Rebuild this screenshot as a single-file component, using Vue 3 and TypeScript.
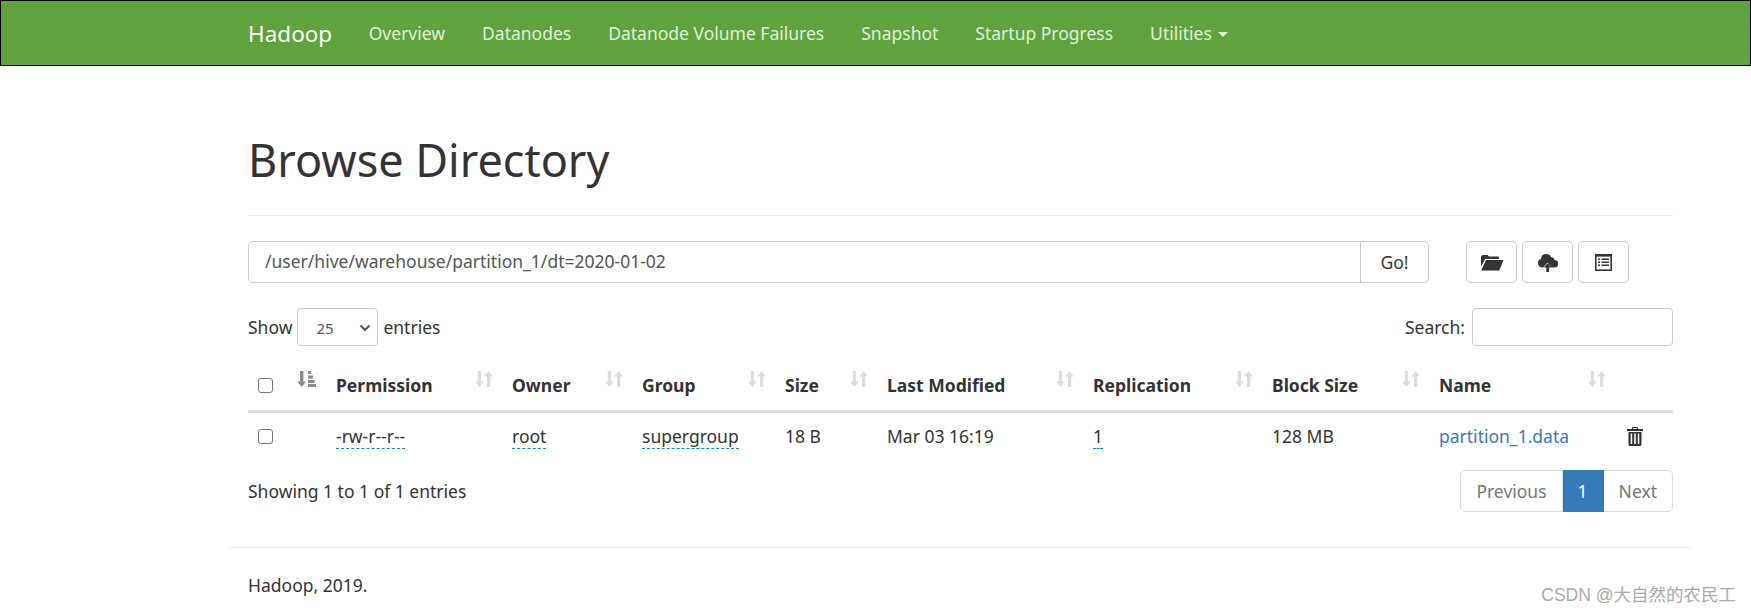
<script setup lang="ts">
const navLinks = ['Overview', 'Datanodes', 'Datanode Volume Failures', 'Snapshot', 'Startup Progress']

const columns = [
  { label: 'Permission', width: 176 },
  { label: 'Owner', width: 130 },
  { label: 'Group', width: 143 },
  { label: 'Size', width: 102 },
  { label: 'Last Modified', width: 206 },
  { label: 'Replication', width: 179 },
  { label: 'Block Size', width: 167 },
  { label: 'Name', width: 186 },
]
</script>

<template>
  <div class="page">
    <nav class="navbar">
      <a class="brand">Hadoop</a>
      <a v-for="link in navLinks" :key="link" class="nav-link">{{ link }}</a>
      <a class="nav-link">Utilities <span class="caret" /></a>
    </nav>

    <div class="container">
      <div class="page-header">
        <h1>Browse Directory</h1>
      </div>

      <div class="path-row">
        <div class="path-group">
          <div class="path-input">/user/hive/warehouse/partition_1/dt=2020-01-02</div>
          <button class="go">Go!</button>
        </div>
        <div class="tools">
          <button class="tool">
            <svg width="24" height="20" viewBox="0 0 24 20">
              <path fill="#333" d="M1 4.5 2.2 3h5.6l1 1.5h9.5l.9 1V7H5.2L1 14.5z" />
              <path fill="#333" d="M6 8h17.5l-4.2 10.5H1.2z" />
            </svg>
          </button>
          <button class="tool">
            <svg width="21" height="21" viewBox="0 0 21 21">
              <path fill="#333" d="M5 15.5a4.4 4.4 0 0 1-1-8.6 5 5 0 0 1 5-5 5.4 5.4 0 0 1 5.2 3.4 3.4 3.4 0 0 1 3.5 2.6 3.8 3.8 0 0 1-.6 7.6h-2.4l-4.2-5-4.3 5z" />
              <path fill="#333" d="m10.7 11.2 3.9 4.4h-2.5V20H9.3v-4.4H6.8z" />
            </svg>
          </button>
          <button class="tool">
            <svg width="17" height="17" viewBox="0 0 17 17">
              <rect x="0.8" y="0.8" width="15.4" height="15.4" fill="none" stroke="#333" stroke-width="1.6" />
              <rect x="0" y="0" width="17" height="2.6" fill="#333" />
              <path fill="#333" d="M3 4.5h2v1.6H3zM6.5 4.5H14v1.6H6.5zM3 7.5h2v1.6H3zM6.5 7.5H14v1.6H6.5zM3 10.5h2v1.6H3zM6.5 10.5H14v1.6H6.5z" />
            </svg>
          </button>
        </div>
      </div>

      <div class="filter-row">
        <label class="length">
          Show
          <span class="select">
            <span>25</span>
            <svg width="12" height="8" viewBox="0 0 12 8"><path d="m1.5 1.5 4.5 4.5 4.5-4.5" fill="none" stroke="#555" stroke-width="2" /></svg>
          </span>
          entries
        </label>
        <label class="search">Search: <span class="search-input" /></label>
      </div>

      <table class="files">
        <colgroup>
          <col style="width: 40px" />
          <col style="width: 38px" />
          <col v-for="col in columns" :key="col.label" :style="{ width: col.width + 'px' }" />
          <col style="width: 58px" />
        </colgroup>
        <thead>
          <tr>
            <th><span class="check" /></th>
            <th class="sort-cell">
              <svg class="sort-on" width="19" height="18" viewBox="0 0 19 18">
                <path fill="#8a8a8a" d="M3 1h3.4v10.5H9L4.7 17 .4 11.500H3z" />
                <path fill="#8a8a8a" d="M11 1h3v3h-3zM11 5.500h5v3h-5zM11 10h6.500v3H11zM11 14h8v3h-8z" />
              </svg>
            </th>
            <th v-for="col in columns" :key="col.label">
              {{ col.label }}
              <svg class="sort" width="18" height="18" viewBox="0 0 18 18">
                <path fill="#dcdcdc" d="M2.800 1h3.200v10.500h2.600L4.400 17 .2 11.500h2.600z" />
                <path fill="#dcdcdc" d="M12 17V6.500H9.400L13.600 1l4.200 5.500h-2.600V17z" />
              </svg>
            </th>
            <th />
          </tr>
        </thead>
        <tbody>
          <tr>
            <td><span class="check" /></td>
            <td />
            <td><span class="editable">-rw-r--r--</span></td>
            <td><span class="editable">root</span></td>
            <td><span class="editable">supergroup</span></td>
            <td>18 B</td>
            <td>Mar 03 16:19</td>
            <td><span class="editable">1</span></td>
            <td>128 MB</td>
            <td><a class="file-link">partition_1.data</a></td>
            <td>
              <svg class="trash" width="16" height="19" viewBox="0 0 16 19">
                <path fill="#333" d="M5.500 0h5l.8 2H16v2H0V2h4.700zM6.300 1.100 6 2h4l-.3-.9z" />
                <path fill="#333" fill-rule="evenodd" d="M1.500 5h13v12.500L13.500 19h-11l-1-1.500zM3.700 6.500v10.500h1.500V6.500zM7.200 6.500v10.500h1.600V6.500zM10.800 6.500v10.500h1.500V6.500z" />
              </svg>
            </td>
          </tr>
        </tbody>
      </table>

      <div class="table-foot">
        <span>Showing 1 to 1 of 1 entries</span>
        <div class="pagination">
          <a class="pg first">Previous</a>
          <a class="pg active">1</a>
          <a class="pg last">Next</a>
        </div>
      </div>

      <div class="footer">Hadoop, 2019.</div>
    </div>

    <div class="watermark">CSDN @大自然的农民工</div>
  </div>
</template>

<style>
html, body {
  margin: 0;
  background: #fff;
}
</style>

<style scoped>
.page {
  position: relative;
  width: 1751px;
  height: 614px;
  overflow: hidden;
  font-family: "Noto Sans", "Noto Sans CJK SC", sans-serif;
  font-size: 17.5px;
  line-height: 25px;
  color: #333;
}
.navbar {
  display: flex;
  align-items: center;
  box-sizing: border-box;
  height: 66px;
  padding-left: 229px;
  background: #5fa33e;
  border: 1px solid #000;
}
.brand {
  padding: 0 18px;
  font-size: 22.5px;
  color: #fff;
}
.nav-link {
  padding: 0 18.500px;
  color: #dff0d8;
}
.caret {
  display: inline-block;
  margin-left: 2px;
  vertical-align: middle;
  border-top: 5px solid #dff0d8;
  border-left: 5px solid transparent;
  border-right: 5px solid transparent;
}
.container {
  box-sizing: border-box;
  width: 1463px;
  margin-left: 229px;
  padding: 0 19px;
}
.page-header {
  margin-top: 50px;
  padding-bottom: 11px;
  border-bottom: 1px solid #eee;
}
h1 {
  margin: 0;
  font-size: 45px;
  font-weight: 400;
  line-height: 88px;
}
.path-row {
  display: flex;
  margin-top: 25px;
}
.path-group {
  display: flex;
  width: 1181px;
  height: 42px;
  box-sizing: border-box;
  border: 1px solid #ccc;
  border-radius: 5px;
}
.path-input {
  flex: 1;
  padding: 7px 16px;
  color: #555;
}
.go {
  width: 68px;
  padding: 0;
  font: inherit;
  color: #333;
  background: #fff;
  border: 0;
  border-left: 1px solid #ccc;
  border-radius: 0 5px 5px 0;
}
.tools {
  display: flex;
  gap: 5px;
  margin-left: 37px;
}
.tool {
  display: flex;
  align-items: center;
  justify-content: center;
  box-sizing: border-box;
  width: 51px;
  height: 42px;
  padding: 0;
  background: #fff;
  border: 1px solid #ccc;
  border-radius: 5px;
}
.filter-row {
  display: flex;
  align-items: center;
  justify-content: space-between;
  margin-top: 25px;
}
.length,
.search {
  display: flex;
  align-items: center;
  gap: 5px;
}
.select {
  display: flex;
  align-items: center;
  justify-content: space-between;
  box-sizing: border-box;
  width: 81px;
  height: 38px;
  padding: 2px 6px 0 18px;
  font-size: 15px;
  color: #555;
  border: 1px solid #ccc;
  border-radius: 4px;
}
.search {
  gap: 7px;
}
.search-input {
  display: block;
  box-sizing: border-box;
  width: 201px;
  height: 38px;
  border: 1px solid #ccc;
  border-radius: 4px;
}
.files {
  width: 1425px;
  margin-top: 7px;
  table-layout: fixed;
  border-collapse: collapse;
}
.files th {
  position: relative;
  height: 58px;
  box-sizing: border-box;
  padding: 8px 10px 0;
  text-align: left;
  font-weight: 700;
  border-bottom: 3px solid #ddd;
}
.files td {
  height: 50px;
  box-sizing: border-box;
  padding: 0 10px;
}
.check {
  display: block;
  box-sizing: border-box;
  width: 15px;
  height: 15px;
  border: 1px solid #767676;
  border-radius: 3px;
}
.sort,
.sort-on {
  position: absolute;
  top: 17px;
}
.sort {
  right: 9px;
}
.sort-on {
  left: 9px;
}
.editable {
  display: inline-block;
  line-height: 24px;
  border-bottom: 1px dashed #08c;
}
.file-link {
  color: #337ab7;
}
.trash {
  display: block;
  margin-left: 2px;
}
.table-foot {
  display: flex;
  align-items: center;
  justify-content: space-between;
  margin-top: 9px;
}
.pagination {
  display: flex;
  height: 42px;
}
.pg {
  box-sizing: border-box;
  padding: 8px 15px;
  color: #777;
  border: 1px solid #ddd;
  border-left: 0;
}
.first {
  border-left: 1px solid #ddd;
  border-radius: 5px 0 0 5px;
}
.last {
  border-radius: 0 5px 5px 0;
}
.active {
  color: #fff;
  background: #337ab7;
  border-color: #337ab7;
}
.footer {
  margin: 35px -19px 0;
  padding: 25px 19px 0;
  border-top: 1px solid #eee;
}
.watermark {
  position: absolute;
  right: 15px;
  top: 583px;
  font-family: "Liberation Sans", "Noto Sans CJK SC", sans-serif;
  font-size: 17.5px;
  color: #aaa;
}
</style>
